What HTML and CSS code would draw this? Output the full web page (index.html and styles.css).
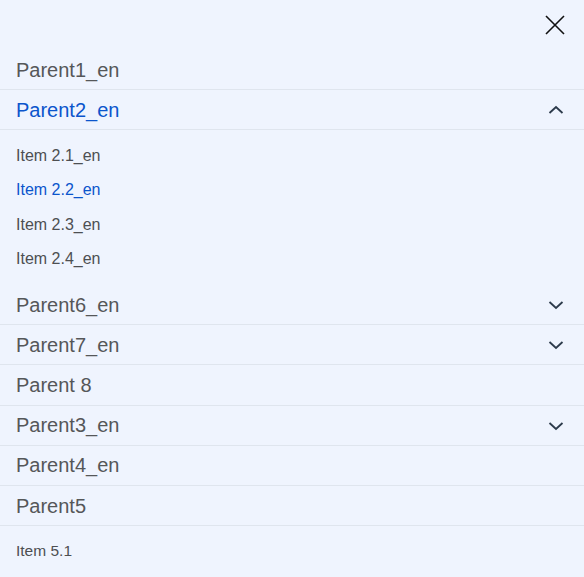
FILE: index.html
```html
<!DOCTYPE html>
<html lang="en">
<head>
<meta charset="utf-8">
<title>Menu</title>
<link rel="stylesheet" href="styles.css">
</head>
<body>
<div class="menu">
  <div class="header">
    <button class="close" aria-label="Close">
      <svg width="20" height="20" viewBox="0 0 20 20"><path d="M1 1 L19 19 M19 1 L1 19" stroke="#111" stroke-width="1.6" fill="none"/></svg>
    </button>
  </div>
  <ul class="nav">
    <li class="row"><span>Parent1_en</span></li>
    <li class="row active"><span>Parent2_en</span>
      <svg class="chev" width="16" height="10" viewBox="0 0 16 10"><path d="M1.5 8 L8 2 L14.5 8" stroke="#2c3a4b" stroke-width="1.8" fill="none"/></svg>
    </li>
    <li class="sub">
      <ul>
        <li class="item">Item 2.1_en</li>
        <li class="item active">Item 2.2_en</li>
        <li class="item">Item 2.3_en</li>
        <li class="item">Item 2.4_en</li>
      </ul>
    </li>
    <li class="row"><span>Parent6_en</span>
      <svg class="chev" width="16" height="10" viewBox="0 0 16 10"><path d="M1.5 2 L8 8 L14.5 2" stroke="#2c3a4b" stroke-width="1.8" fill="none"/></svg>
    </li>
    <li class="row"><span>Parent7_en</span>
      <svg class="chev" width="16" height="10" viewBox="0 0 16 10"><path d="M1.5 2 L8 8 L14.5 2" stroke="#2c3a4b" stroke-width="1.8" fill="none"/></svg>
    </li>
    <li class="row"><span>Parent 8</span></li>
    <li class="row"><span>Parent3_en</span>
      <svg class="chev" width="16" height="10" viewBox="0 0 16 10"><path d="M1.5 2 L8 8 L14.5 2" stroke="#2c3a4b" stroke-width="1.8" fill="none"/></svg>
    </li>
    <li class="row"><span>Parent4_en</span></li>
    <li class="row"><span>Parent5</span></li>
    <li class="sub last">
      <ul>
        <li class="item small">Item 5.1</li>
      </ul>
    </li>
  </ul>
</div>
</body>
</html>
```
FILE: styles.css
```css
html, body {
  margin: 0;
  padding: 0;
  background: #eff4fe;
}
body {
  font-family: "Liberation Sans", Arial, sans-serif;
  color: #555759;
}
.menu {
  width: 584px;
  height: 577px;
  overflow: hidden;
}
.header {
  height: 50px;
  display: flex;
  justify-content: flex-end;
  align-items: center;
  padding-right: 19px;
  box-sizing: border-box;
}
.close {
  background: none;
  border: 0;
  padding: 0;
  width: 20px;
  height: 20px;
  display: flex;
  cursor: pointer;
}
.nav, .sub ul {
  list-style: none;
  margin: 0;
  padding: 0;
}
.row {
  height: 40.2px;
  box-sizing: border-box;
  border-bottom: 1px solid #dfe5ee;
  display: flex;
  align-items: center;
  justify-content: space-between;
  padding: 1px 20px 0 16px;
  font-size: 20px;
}
.row.active {
  color: #0b55cc;
}
.chev {
  display: block;
}
.sub {
  padding: 8px 0 8.6px;
  border-bottom: 0;
}
.item {
  height: 34.5px;
  display: flex;
  align-items: center;
  padding-left: 16px;
  font-size: 16px;
  color: #4d4f52;
}
.item.active {
  color: #0b55cc;
}
.item.small {
  font-size: 15.5px;
}
```
